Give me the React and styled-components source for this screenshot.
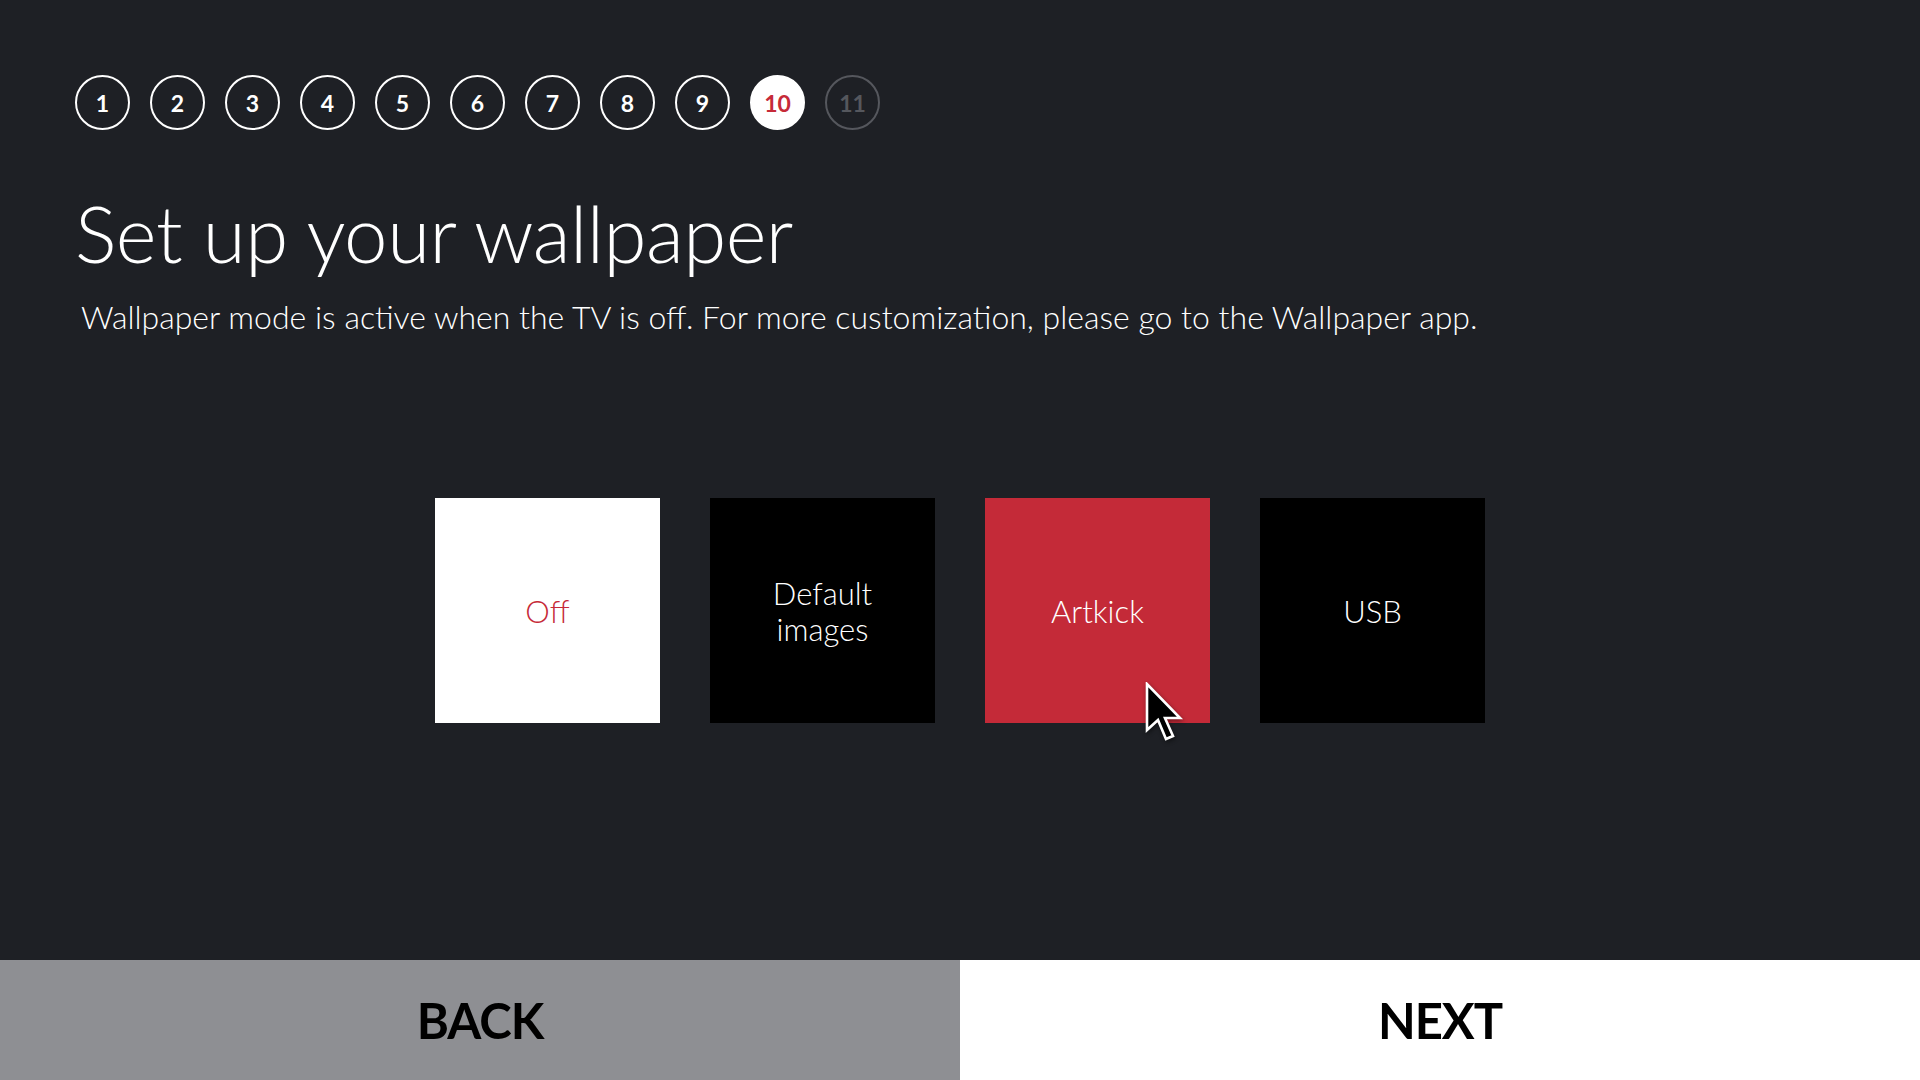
import React from "react";
import styled, { createGlobalStyle } from "styled-components";

const Global = createGlobalStyle`
  html, body { margin: 0; padding: 0; background: #1e2025; }
  body { font-family: Lato, "Open Sans", sans-serif; }
  * { box-sizing: border-box; }
`;

const Screen = styled.div`
  width: 1920px;
  height: 1080px;
  background: #1e2025;
  display: flex;
  flex-direction: column;
  overflow: hidden;
  position: relative;
`;

const Content = styled.div`
  flex: 1;
  padding: 75px 0 0 75px;
  display: flex;
  flex-direction: column;
`;

const Steps = styled.div`
  display: flex;
  gap: 20px;
`;

const Step = styled.div`
  width: 55px;
  height: 55px;
  border-radius: 50%;
  display: flex;
  align-items: center;
  justify-content: center;
  font-family: Lato, sans-serif;
  font-weight: 700;
  font-size: 23px;
  border: 2px solid ${(p) => (p.$state === "todo" ? "#55575d" : "#ffffff")};
  background: ${(p) => (p.$state === "current" ? "#ffffff" : "transparent")};
  color: ${(p) =>
    p.$state === "current" ? "#c62a38" : p.$state === "todo" ? "#55575d" : "#ffffff"};
`;

const Title = styled.h1`
  margin: 64px 0 0 0;
  font-family: Lato, sans-serif;
  font-weight: 300;
  font-size: 78px;
  line-height: 1;
  color: #ffffff;
  letter-spacing: -0.5px;
`;

const Subtitle = styled.p`
  margin: 26px 0 0 6px;
  font-family: Lato, sans-serif;
  font-weight: 300;
  font-size: 32px;
  line-height: 1.2;
  color: #ffffff;
`;

const Tiles = styled.div`
  display: flex;
  justify-content: center;
  gap: 50px;
  margin-top: 162px;
  margin-left: -75px;
`;

const Tile = styled.div`
  width: 225px;
  height: 225px;
  display: flex;
  align-items: center;
  justify-content: center;
  text-align: center;
  font-family: Lato, sans-serif;
  font-weight: 300;
  font-size: 31px;
  line-height: 1.17;
  position: relative;
  background: ${(p) => p.$bg};
  color: ${(p) => p.$fg};
`;

const Footer = styled.div`
  display: grid;
  grid-template-columns: 1fr 1fr;
  height: 120px;
`;

const FooterButton = styled.div`
  display: flex;
  align-items: center;
  justify-content: center;
  font-family: Lato, sans-serif;
  font-weight: 700;
  font-size: 49px;
  color: #000;
  letter-spacing: -1px;
  background: ${(p) => (p.$primary ? "#ffffff" : "#8e8f93")};
`;

const Cursor = styled.svg`
  position: absolute;
  left: 160px;
  top: 184px;
  filter: drop-shadow(1px 2px 2px rgba(0, 0, 0, 0.45));
`;

const steps = [1, 2, 3, 4, 5, 6, 7, 8, 9, 10, 11];

export default function App() {
  return (
    <Screen>
      <Global />
      <Content>
        <Steps>
          {steps.map((n) => (
            <Step key={n} $state={n < 10 ? "done" : n === 10 ? "current" : "todo"}>
              {n}
            </Step>
          ))}
        </Steps>
        <Title>Set up your wallpaper</Title>
        <Subtitle>
          Wallpaper mode is active when the TV is off. For more customization, please go to the Wallpaper app.
        </Subtitle>
        <Tiles>
          <Tile $bg="#ffffff" $fg="#c62a38">Off</Tile>
          <Tile $bg="#000000" $fg="#ffffff">
            Default
            <br />
            images
          </Tile>
          <Tile $bg="#c42a38" $fg="#ffffff">
            Artkick
            <Cursor width="40" height="62" viewBox="0 0 20 31">
              <path
                d="M1 1 L1 24 L6.5 19 L10.5 28.5 L14 27 L10 18 L17.5 18 Z"
                fill="#000"
                stroke="#fff"
                strokeWidth="1.3"
                strokeLinejoin="miter"
              />
            </Cursor>
          </Tile>
          <Tile $bg="#000000" $fg="#ffffff">USB</Tile>
        </Tiles>
      </Content>
      <Footer>
        <FooterButton>BACK</FooterButton>
        <FooterButton $primary>NEXT</FooterButton>
      </Footer>
    </Screen>
  );
}
